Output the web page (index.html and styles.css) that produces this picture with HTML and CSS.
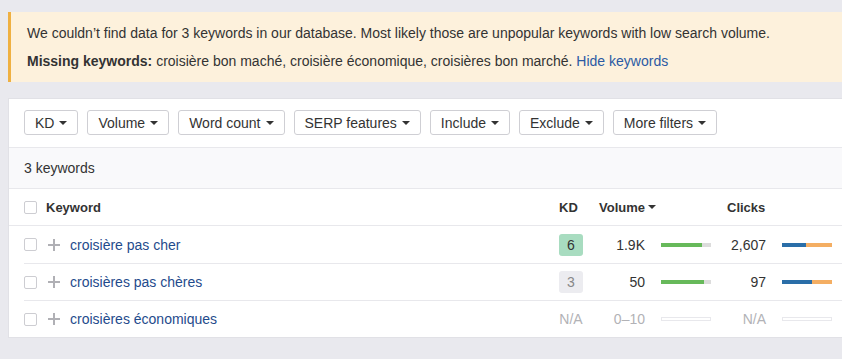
FILE: index.html
```html
<!DOCTYPE html>
<html lang="en">
<head>
  <meta charset="UTF-8" />
  <title>Keywords</title>
  <link rel="stylesheet" href="styles.css">
</head>
<body>

<div class="page">
  <div class="notice">
    <p>We couldn’t find data for 3 keywords in our database. Most likely those are unpopular keywords with low search volume.</p>
    <p><b>Missing keywords:</b> croisière bon maché, croisière économique, croisières bon marché. <a href="#">Hide keywords</a></p>
  </div>

  <div class="card">
    <div class="filters">
      <button class="filter">KD<span class="caret"></span></button>
      <button class="filter">Volume<span class="caret"></span></button>
      <button class="filter">Word count<span class="caret"></span></button>
      <button class="filter">SERP features<span class="caret"></span></button>
      <button class="filter">Include<span class="caret"></span></button>
      <button class="filter">Exclude<span class="caret"></span></button>
      <button class="filter">More filters<span class="caret"></span></button>
    </div>

    <div class="count">3 keywords</div>

    <div class="table">
      <div class="row head">
        <span class="check"></span>
        <span class="col-keyword">Keyword</span>
        <span class="col-kd">KD</span>
        <span class="col-metric">Volume<span class="caret dark"></span></span>
        <span class="col-metric">Clicks</span>
      </div>

      <div class="row item">
        <span class="check"></span>
        <span class="plus"></span>
        <a class="kw" href="#">croisière pas cher</a>
        <span class="kd green">6</span>
        <span class="num">1.9K</span>
        <span class="bar"><i class="fill-green" style="width:82%"></i></span>
        <span class="num">2,607</span>
        <span class="bar split"><i class="fill-blue" style="width:48%"></i><i class="fill-orange" style="width:52%"></i></span>
      </div>

      <div class="row item">
        <span class="check"></span>
        <span class="plus"></span>
        <a class="kw" href="#">croisières pas chères</a>
        <span class="kd grey">3</span>
        <span class="num">50</span>
        <span class="bar"><i class="fill-green" style="width:86%"></i></span>
        <span class="num">97</span>
        <span class="bar split"><i class="fill-blue" style="width:60%"></i><i class="fill-orange" style="width:40%"></i></span>
      </div>

      <div class="row item">
        <span class="check"></span>
        <span class="plus"></span>
        <a class="kw" href="#">croisières économiques</a>
        <span class="kd na">N/A</span>
        <span class="num na">0–10</span>
        <span class="bar empty"></span>
        <span class="num na">N/A</span>
        <span class="bar empty"></span>
      </div>
    </div>
  </div>
</div>

</body>
</html>
```

FILE: styles.css
```css
* { box-sizing: border-box; }
body {
  margin: 0;
  background: #e9e9ee;
  font-family: "Liberation Sans", Arial, sans-serif;
  font-size: 14px;
  color: #333;
}
a { color: #1f4b8c; text-decoration: none; }
.page { padding: 12px 0 0 8px; }

.notice {
  background: #fdf1dc;
  border-left: 3px solid #efb042;
  padding: 12px 16px;
  margin-bottom: 16px;
}
.notice p { margin: 0; line-height: 18px; }
.notice p + p { margin-top: 10px; }
.notice a { color: #2b5aa3; }

.card {
  background: #fff;
  border: 1px solid #e1e1e6;
  border-right: none;
}

.filters {
  display: flex;
  gap: 9px;
  padding: 11px 15px 12px;
  border-bottom: 1px solid #e8e8ec;
}
.filter {
  height: 25px;
  padding: 0 10px;
  border: 1px solid #cfcfd4;
  border-radius: 3px;
  background: #fff;
  font: inherit;
  color: #333;
  display: flex;
  align-items: center;
}
.caret {
  display: inline-block;
  width: 0;
  height: 0;
  margin-left: 5px;
  border-left: 4px solid transparent;
  border-right: 4px solid transparent;
  border-top: 4px solid #333;
}
.caret.dark { margin-left: 3px; }

.count {
  background: #f9f9fb;
  height: 41px;
  line-height: 41px;
  padding-left: 15px;
  border-bottom: 1px solid #e8e8ec;
}

.row {
  display: grid;
  grid-template-columns: 24px 22px 1fr 24px 62px 66px 55px 66px 10px;
  align-items: center;
  height: 37px;
}
.head {
  padding-left: 15px;
  font-size: 13px;
  font-weight: bold;
  border-bottom: 1px solid #e8e8ec;
}
.head .check { grid-column: 1; }
.head .col-keyword { grid-column: 2 / 4; margin-left: -2px; }
.head .col-kd { grid-column: 4; }
.head .col-metric { grid-column: span 2; padding-left: 16px; display: flex; align-items: center; }

.item { margin-left: 15px; }
.item + .item { border-top: 1px solid #e8e8ec; }

.check {
  width: 13px;
  height: 13px;
  border: 1px solid #cdcdd2;
  border-radius: 2px;
  background: #fff;
}
.plus {
  position: relative;
  width: 12px;
  height: 12px;
}
.plus::before, .plus::after {
  content: "";
  position: absolute;
  background: #b0b0b5;
}
.plus::before { left: 5px; top: 0; width: 2px; height: 12px; }
.plus::after { left: 0; top: 5px; width: 12px; height: 2px; }

.kw { color: #1f4b8c; }

.kd {
  width: 24px;
  height: 22px;
  line-height: 22px;
  text-align: center;
  border-radius: 3px;
}
.kd.green { background: #a8dcc0; color: #333; }
.kd.grey { background: #ececf0; color: #888; }
.kd.na { color: #b2b2b6; }

.num { text-align: right; }
.num.na { color: #b2b2b6; }

.bar {
  justify-self: end;
  width: 50px;
  height: 4px;
  background: #dcdcdc;
  display: flex;
}
.bar i { display: block; height: 100%; }
.fill-green { background: #67b95a; }
.fill-blue { background: #2a6ea8; }
.fill-orange { background: #f4ae63; }
.bar.empty { background: #fff; border: 1px solid #e8e8ec; }
```
